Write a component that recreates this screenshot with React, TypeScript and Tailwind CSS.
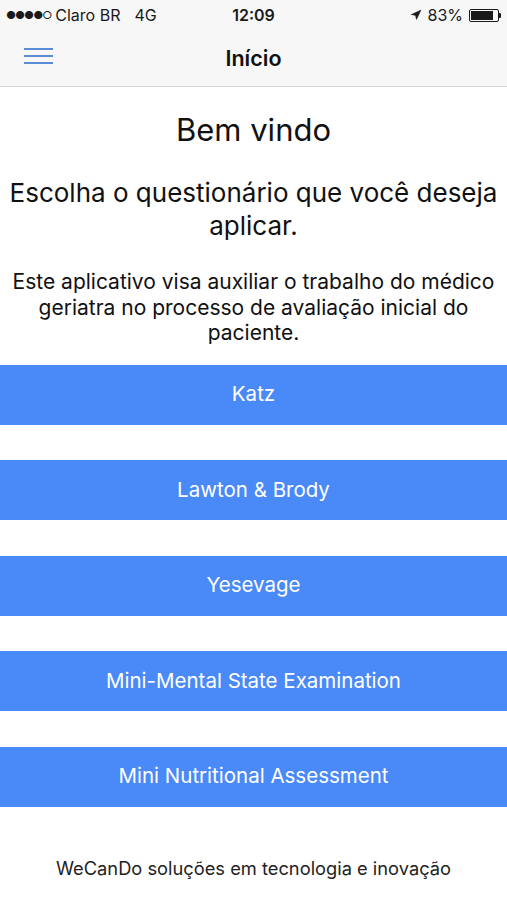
import { Navigation } from "lucide-react";

const items = ["Katz", "Lawton & Brody", "Yesevage", "Mini-Mental State Examination", "Mini Nutritional Assessment"];

export default function App() {
  return (
    <div className="w-[507px] h-[900px] bg-white flex flex-col text-[#111] font-['Inter','Noto_Sans',sans-serif]">
      <div className="bg-[#f7f7f7] border-b border-[#d6d6d6]">
        <div className="h-[30px] px-[6px] flex items-center justify-between text-[16px] text-[#1a1a1a]">
          <div className="flex items-center w-[180px]">
            <span className="text-[11px] tracking-[-1px]">●●●●○</span>
            <span className="ml-[4px]">Claro BR</span>
            <span className="ml-[14px]">4G</span>
          </div>
          <span className="font-semibold">12:09</span>
          <div className="flex items-center justify-end w-[180px] gap-[6px]">
            <Navigation className="w-[12px] h-[12px] fill-[#1a1a1a]" strokeWidth={1} />
            <span>83%</span>
            <div className="flex items-center">
              <div className="w-[30px] h-[13px] border border-[#1a1a1a] rounded-[2px] p-[1px]">
                <div className="w-[83%] h-full bg-[#1a1a1a]" />
              </div>
              <div className="w-[2px] h-[5px] bg-[#1a1a1a] rounded-r-[1px]" />
            </div>
          </div>
        </div>
        <div className="h-[56px] relative flex items-center justify-center">
          <div className="absolute left-[24px] top-[18px] flex flex-col gap-[5px]">
            <div className="w-[29px] h-[2px] bg-[#5b8ad6]" />
            <div className="w-[29px] h-[2px] bg-[#5b8ad6]" />
            <div className="w-[29px] h-[2px] bg-[#5b8ad6]" />
          </div>
          <span className="text-[21.5px] font-semibold">Início</span>
        </div>
      </div>

      <div className="flex flex-col items-center text-center">
        <h1 className="mt-[25px] text-[31px] leading-[36px]">Bem vindo</h1>
        <p className="mt-[28px] text-[26px] leading-[33px] px-[4px]">Escolha o questionário que você deseja aplicar.</p>
        <p className="mt-[27px] text-[21px] leading-[25.5px] px-[6px]">
          Este aplicativo visa auxiliar o trabalho do médico geriatra no processo de avaliação inicial do paciente.
        </p>
      </div>

      <div className="mt-[19px] flex flex-col gap-[35.5px]">
        {items.map((t) => (
          <div key={t} className="h-[60px] bg-[#4a89f8] flex items-center justify-center text-white text-[20.5px]">
            {t}
          </div>
        ))}
      </div>

      <div className="mt-[48px] text-center text-[18.3px] text-[#222]">WeCanDo soluções em tecnologia e inovação</div>
    </div>
  );
}
